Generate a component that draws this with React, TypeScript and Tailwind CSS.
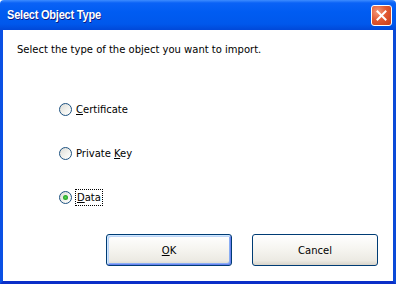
import React from "react";

function Radio({ checked }: { checked?: boolean }) {
  return (
    <span className="relative w-[13px] h-[13px] rounded-full border border-[#1c5180] bg-[linear-gradient(135deg,#dcdcd7_0%,#f4f4f0_60%,#ffffff_100%)] flex items-center justify-center shrink-0">
      {checked && (
        <span className="w-[5px] h-[5px] rounded-full bg-[radial-gradient(circle,#55d451_0%,#21a121_70%,#1a8a1a_100%)]" />
      )}
    </span>
  );
}

function Row({ label, checked }: { label: React.ReactNode; checked?: boolean }) {
  return (
    <div className="flex items-center h-[18px] gap-[2px]">
      <Radio checked={checked} />
      {checked ? (
        <span className="border border-dotted border-black px-[1px] leading-[15px] ml-[1px]">{label}</span>
      ) : (
        <span className="ml-[2px] leading-[15px]">{label}</span>
      )}
    </div>
  );
}

export default function App() {
  return (
    <div
      className="w-[396px] h-[284px] flex flex-col text-[10px] text-black"
      style={{ fontFamily: '"DejaVu Sans", Verdana, sans-serif' }}
    >
      <div className="h-[30px] shrink-0 flex items-center justify-between pl-[7px] pr-[4px] rounded-t-[4px] bg-[linear-gradient(180deg,#3d8cff_0%,#0a62f6_10%,#005cf2_40%,#0058ec_80%,#0148d8_100%)]">
        <span
          className="text-white font-bold text-[13.5px] tracking-[-0.3px] origin-left scale-x-[0.82] whitespace-nowrap [text-shadow:1px_1px_0_#0a1883]"
          style={{ fontFamily: '"Liberation Sans", Arial, sans-serif' }}
        >
          Select Object Type
        </span>
        <span className="w-[21px] h-[21px] rounded-[3px] border border-white bg-[radial-gradient(circle_at_30%_30%,#f39a7c_0%,#e25a33_45%,#c83c18_100%)] flex items-center justify-center">
          <svg width="11" height="11" viewBox="0 0 11 11">
            <path d="M1.5 1.5 L9.5 9.5 M9.5 1.5 L1.5 9.5" stroke="white" strokeWidth="2" strokeLinecap="square" />
          </svg>
        </span>
      </div>
      <div className="flex-1 flex flex-col bg-white border-l-[3px] border-r-[3px] border-b-[3px] border-l-[#0a50e4] border-r-[#0a4ad8] border-b-[#0a2fc8]">
        <div className="pl-[14px] pt-[13px] leading-[13px]">Select the type of the object you want to import.</div>
        <div className="flex flex-col gap-[26px] pl-[56px] mt-[44px]">
          <Row label={<><u>C</u>ertificate</>} />
          <Row label={<>Private <u>K</u>ey</>} />
          <Row label={<><u>D</u>ata</>} checked />
        </div>
        <div className="flex justify-end gap-[20px] pr-[15px] mt-[28px]">
          <button className="w-[126px] h-[32px] rounded-[3px] border border-[#003c74] bg-[linear-gradient(180deg,#ffffff_0%,#f5f4ef_50%,#eceae3_85%,#d8d4ca_100%)] shadow-[inset_1px_1px_0_#cee7ff,inset_-1px_-1px_0_#6982ee,inset_2px_2px_0_#bcd4f6,inset_-2px_-2px_0_#89adf4] text-[10px]">
            <u>O</u>K
          </button>
          <button className="w-[126px] h-[32px] rounded-[3px] border border-[#003c74] bg-[linear-gradient(180deg,#ffffff_0%,#f5f4ef_50%,#eceae3_85%,#d8d4ca_100%)] text-[10px]">
            Cancel
          </button>
        </div>
      </div>
    </div>
  );
}
